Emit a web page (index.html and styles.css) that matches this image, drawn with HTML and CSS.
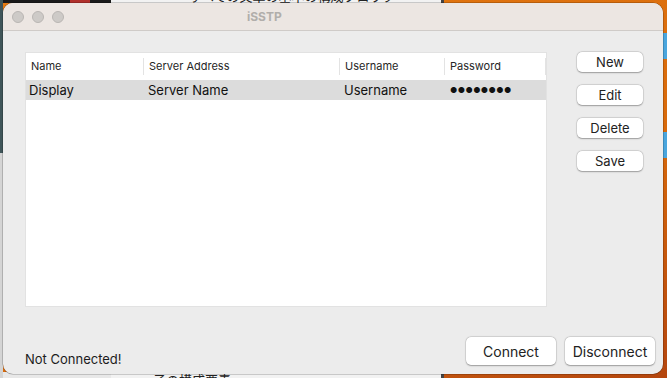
FILE: index.html
```html
<!DOCTYPE html>
<html lang="en">
<head>
    <meta charset="UTF-8">
    <meta name="viewport" content="width=device-width, initial-scale=1.0">
    <title>iSSTP</title>
    <link rel="stylesheet" href="styles.css">
</head>
<body>
    <div class="desktop">
        <div class="back-window">
            <p class="back-title">すべての文章の基本の構成ブロック</p>
            <p class="back-foot">子の構成要素</p>
        </div>
        <span class="folder folder-top"></span>
        <span class="folder folder-mid"></span>

        <main class="window">
            <header class="titlebar">
                <div class="lights">
                    <span class="light"></span>
                    <span class="light"></span>
                    <span class="light"></span>
                </div>
                <h1 class="title">iSSTP</h1>
            </header>

            <section class="content">
                <div class="top">
                    <div class="table">
                        <div class="row head">
                            <span class="cell c-name">Name</span>
                            <span class="cell c-server">Server Address</span>
                            <span class="cell c-user">Username</span>
                            <span class="cell c-pass">Password</span>
                        </div>
                        <div class="row selected">
                            <span class="cell c-name">Display</span>
                            <span class="cell c-server">Server Name</span>
                            <span class="cell c-user">Username</span>
                            <span class="cell c-pass dots">●●●●●●●●</span>
                        </div>
                    </div>
                    <div class="side">
                        <button class="btn">New</button>
                        <button class="btn">Edit</button>
                        <button class="btn">Delete</button>
                        <button class="btn">Save</button>
                    </div>
                </div>

                <footer class="bottom">
                    <span class="status">Not Connected!</span>
                    <div class="actions">
                        <button class="btn big">Connect</button>
                        <button class="btn big">Disconnect</button>
                    </div>
                </footer>
            </section>
        </main>
    </div>
</body>
</html>
```

FILE: styles.css
```css
html {
    box-sizing: border-box;
    font-family: 'Inter', 'Noto Sans CJK JP', sans-serif;
}

*, *::after, *::before {
    box-sizing: inherit;
}

body {
    margin: 0;
    width: 667px;
    height: 378px;
    overflow: hidden;
}

.desktop {
    position: relative;
    width: 667px;
    height: 378px;
    overflow: hidden;
    padding: 3px 4px 4px 3px;
    background:
        linear-gradient(to bottom, #3f5559 0 153px, #d4d4d4 153px) left / 3px 100% no-repeat,
        linear-gradient(to right, #1a1a1a 0 70px, #b0302c 70px 90px, #1a1a1a 90px 111px) top left / 111px 3px no-repeat,
        linear-gradient(to right, #e8e8e8 0 123px, #555 123px 130px) bottom left / 130px 6px no-repeat,
        linear-gradient(160deg, #e57a10, #d86a0c 60%, #b4460e);
}

.back-window {
    position: absolute;
    left: 111px;
    top: 0;
    width: 333px;
    height: 378px;
    overflow: hidden;
    background: #f2f2f2;
    border-right: 3px solid #444;
}

.back-title {
    margin: 0;
    position: absolute;
    left: 78px;
    top: -11px;
    font-size: 13px;
    line-height: 14px;
    color: #222;
}

.back-foot {
    margin: 0;
    position: absolute;
    left: 42px;
    top: 373px;
    font-size: 13px;
    line-height: 14px;
    color: #222;
}

.folder {
    position: absolute;
    right: 0;
    width: 6px;
    height: 26px;
    background: #4aa6de;
}

.folder-top {
    top: 33px;
}

.folder-mid {
    top: 132px;
}

.window {
    position: relative;
    height: 100%;
    display: flex;
    flex-direction: column;
    background: #ececec;
    border-radius: 10px;
    overflow: hidden;
    box-shadow: 0 0 0 0.5px rgba(0, 0, 0, 0.35);
}

.titlebar {
    position: relative;
    height: 28px;
    flex: none;
    display: flex;
    align-items: center;
    background: #ece6e2;
    border-bottom: 1px solid #cfcbc8;
}

.lights {
    display: flex;
    gap: 8px;
    padding-left: 9px;
}

.light {
    width: 12px;
    height: 12px;
    border-radius: 50%;
    background: #cdcac7;
    border: 1px solid #b9b6b3;
}

.title {
    position: absolute;
    left: 244px;
    margin: 0;
    font-size: 12px;
    font-weight: 700;
    color: #b1aeab;
}

.content {
    flex: 1;
    display: flex;
    flex-direction: column;
    padding: 21px 21px 9px 22px;
}

.top {
    display: flex;
    gap: 30px;
}

.table {
    width: 522px;
    height: 255px;
    background: #fff;
    border: 1px solid #e2e2e2;
}

.row {
    display: flex;
    align-items: center;
}

.head {
    height: 27px;
    font-size: 11px;
    color: #262626;
}

.selected {
    height: 20px;
    background: #dcdcdc;
    font-size: 13px;
    color: #111;
}

.cell {
    padding-left: 5px;
}

.head .cell {
    border-right: 1px solid #e3e3e3;
    line-height: 17px;
}

.head .c-name {
    width: 118px;
}

.head .c-server {
    width: 196px;
}

.head .c-user {
    width: 105px;
}

.head .c-pass {
    width: 101px;
}

.selected .cell {
    padding-left: 3px;
}

.selected .c-name {
    width: 119px;
}

.selected .c-server {
    width: 196px;
}

.selected .c-user {
    width: 106px;
}

.dots {
    font-size: 8px;
    letter-spacing: 0.4px;
}

.side {
    display: flex;
    flex-direction: column;
    gap: 13px;
}

.btn {
    width: 66px;
    height: 20px;
    padding: 0;
    font-family: inherit;
    font-size: 13px;
    color: #222;
    background: #fff;
    border: none;
    border-radius: 5px;
    box-shadow: 0 0.5px 1.5px rgba(0, 0, 0, 0.3), 0 0 0 0.5px rgba(0, 0, 0, 0.12);
}

.bottom {
    margin-top: auto;
    display: flex;
    justify-content: space-between;
    align-items: flex-end;
}

.status {
    font-size: 13px;
    line-height: 14px;
    color: #1c1c1c;
    margin-bottom: -1px;
}

.actions {
    display: flex;
    gap: 9px;
    margin-right: -13px;
}

.big {
    width: 90px;
    height: 28px;
    font-size: 14px;
}
```
